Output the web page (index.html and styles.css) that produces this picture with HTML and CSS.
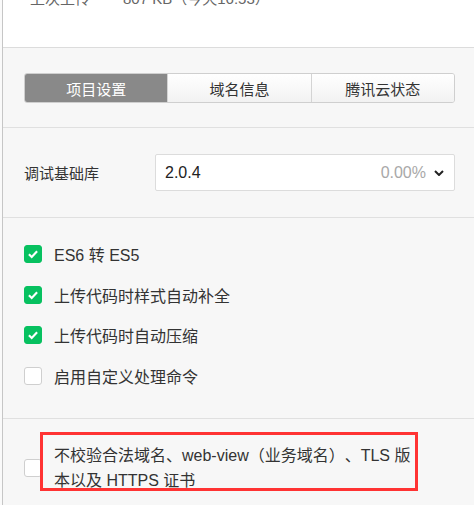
FILE: index.html
```html
<!DOCTYPE html>
<html lang="zh-CN">
<head>
    <meta charset="UTF-8">
    <meta name="viewport" content="width=device-width, initial-scale=1.0">
    <title>项目设置</title>
    <link rel="stylesheet" href="styles.css">
</head>
<body>
    <div class="frame">
        <div class="top">
            <div class="upload-info">
                <span class="upload-label">上次上传</span>
                <span class="upload-size">807 KB（今天16:53）</span>
            </div>
        </div>

        <div class="section tabs-section">
            <div class="tabs">
                <div class="tab active">项目设置</div>
                <div class="tab">域名信息</div>
                <div class="tab">腾讯云状态</div>
            </div>
        </div>

        <div class="section select-section">
            <div class="select-label">调试基础库</div>
            <div class="select">
                <span class="select-value">2.0.4</span>
                <span class="select-usage">0.00%</span>
                <svg class="chevron" viewBox="0 0 10 6">
                    <path d="M1 1l4 4 4-4" />
                </svg>
            </div>
        </div>

        <div class="section checks">
            <label class="check-row">
                <span class="checkbox checked">
                    <svg viewBox="0 0 12 12"><path d="M2.5 6.2l2.4 2.4 4.6-4.9" /></svg>
                </span>
                <span class="check-text">ES6 转 ES5</span>
            </label>
            <label class="check-row">
                <span class="checkbox checked">
                    <svg viewBox="0 0 12 12"><path d="M2.5 6.2l2.4 2.4 4.6-4.9" /></svg>
                </span>
                <span class="check-text">上传代码时样式自动补全</span>
            </label>
            <label class="check-row">
                <span class="checkbox checked">
                    <svg viewBox="0 0 12 12"><path d="M2.5 6.2l2.4 2.4 4.6-4.9" /></svg>
                </span>
                <span class="check-text">上传代码时自动压缩</span>
            </label>
            <label class="check-row">
                <span class="checkbox"></span>
                <span class="check-text">启用自定义处理命令</span>
            </label>
        </div>

        <div class="section bottom">
            <label class="check-row wide">
                <span class="checkbox"></span>
                <span class="check-text wrap">不校验合法域名、web-view（业务域名）、TLS 版本以及 HTTPS 证书</span>
            </label>
            <div class="highlight"></div>
        </div>
    </div>
</body>
</html>
```

FILE: styles.css
```css
* {
    margin: 0;
    padding: 0;
    box-sizing: border-box;
}

body {
    font-family: "Liberation Sans", "Noto Sans CJK SC", sans-serif;
    background: #fafafa;
    color: #333;
    height: 505px;
    overflow: hidden;
    text-spacing-trim: space-all;
}

.frame {
    margin-left: 2px;
    border-left: 1px solid #c6c6c6;
    background: #f7f7f7;
    min-height: 505px;
}

.top {
    height: 48px;
    background: #fff;
    border-bottom: 1px solid #dcdcdc;
    overflow: hidden;
}

.upload-info {
    margin-top: -11px;
    padding-left: 27px;
    font-size: 15px;
    line-height: 20px;
    color: #666;
    display: flex;
    gap: 33px;
}

.section {
    border-bottom: 1px solid #e0e0e0;
}

.tabs-section {
    padding: 25px 19px 24px 21px;
}

.tabs {
    display: flex;
    height: 30px;
    border: 1px solid #cfcfcf;
    border-radius: 3px;
    overflow: hidden;
}

.tab {
    flex: 1;
    display: flex;
    align-items: center;
    justify-content: center;
    font-size: 15px;
    color: #333;
    background: linear-gradient(#fff, #f2f2f2);
    border-left: 1px solid #d4d4d4;
}

.tab:first-child {
    border-left: none;
}

.tab.active {
    background: #898989;
    color: #fff;
}

.select-section {
    display: flex;
    align-items: center;
    padding: 26px 19px 26px 21px;
}

.select-label {
    width: 131px;
    font-size: 15px;
    color: #333;
}

.select {
    flex: 1;
    height: 37px;
    display: flex;
    align-items: center;
    padding: 0 10px 0 9px;
    background: #fff;
    border: 1px solid #dcdcdc;
    border-radius: 2px;
    font-size: 16px;
}

.select-value {
    flex: 1;
    color: #222;
}

.select-usage {
    color: #a8a8a8;
}

.chevron {
    width: 10px;
    height: 6px;
    margin-left: 8px;
    fill: none;
    stroke: #222;
    stroke-width: 2;
}

.checks {
    padding: 16px 19px 22px 21px;
}

.check-row {
    display: flex;
    align-items: center;
    height: 40.5px;
}

.checkbox {
    width: 18px;
    height: 18px;
    flex: none;
    border: 1px solid #cfcfcf;
    border-radius: 3px;
    background: #fff;
    margin-right: 12px;
    display: flex;
    align-items: center;
    justify-content: center;
}

.checkbox.checked {
    background: #07c160;
    border-color: #07c160;
}

.checkbox svg {
    width: 14px;
    height: 14px;
    fill: none;
    stroke: #fff;
    stroke-width: 1.8;
}

.check-text {
    font-size: 16px;
    color: #333;
}

.bottom {
    position: relative;
    padding: 24px 19px 0 21px;
    border-bottom: none;
}

.check-row.wide {
    height: auto;
}

.check-text.wrap {
    max-width: 372px;
    line-height: 25px;
}

.highlight {
    position: absolute;
    left: 37px;
    top: 13px;
    width: 378px;
    height: 59px;
    border: 3px solid #f33;
}
```
